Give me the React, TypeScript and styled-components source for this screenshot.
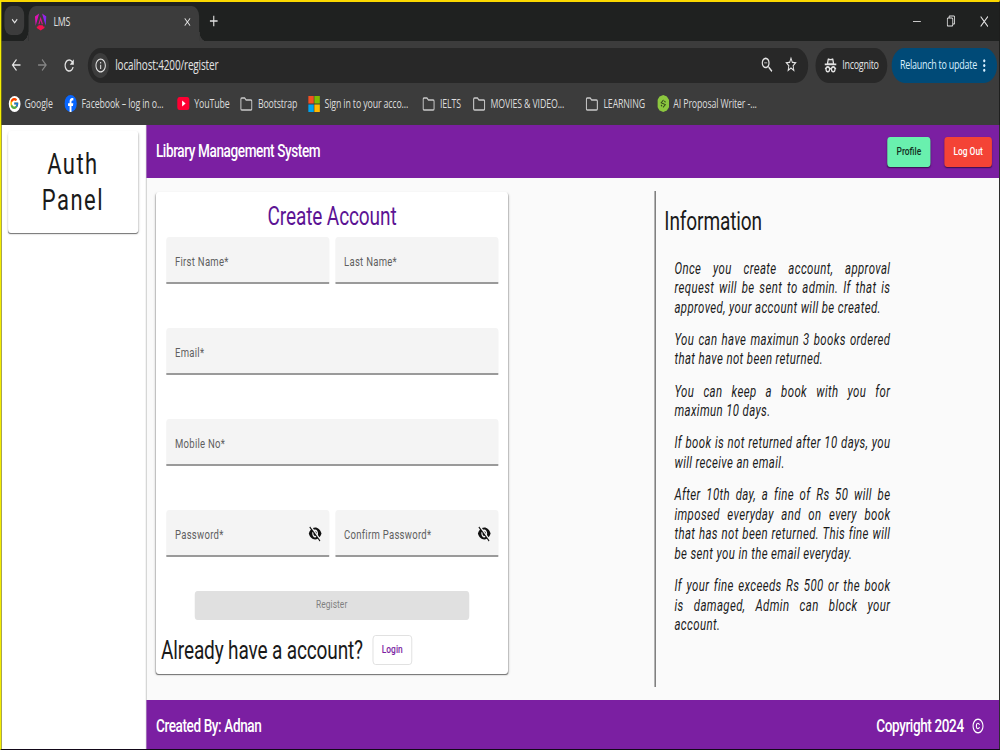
import React from "react";
import styled, { createGlobalStyle, css } from "styled-components";
import {
  MdArrowBack,
  MdArrowForward,
  MdRefresh,
  MdInfoOutline,
  MdZoomOut,
  MdStarBorder,
  MdMoreVert,
  MdVisibilityOff,
  MdCopyright,
  MdClose,
  MdAdd,
  MdKeyboardArrowDown,
} from "react-icons/md";
import { FcGoogle } from "react-icons/fc";

const GlobalStyle = createGlobalStyle`
  * { box-sizing: border-box; }
  html, body { margin: 0; padding: 0; width: 1000px; height: 750px; overflow: hidden; background: #1f2120; }
  h1, h2, p { margin: 0; font-weight: 400; }
  button { font: inherit; padding: 0; border: 0; background: none; color: inherit; }
  svg { display: block; flex: none; }
`;

const ui = `"Open Sans", "Noto Sans", sans-serif`;
const body = `Roboto, "Liberation Sans", sans-serif`;

/* A 1366px wide desktop shown in a narrower viewport. */
const Screen = styled.div`
  width: 1366px;
  height: 750px;
  transform: scaleX(0.73206);
  transform-origin: 0 0;
  display: flex;
  flex-direction: column;
  overflow: hidden;
  border-top: 2px solid #fbd800;
  border-left: 2.7px solid #f5ee00;
  border-right: 1.4px solid #1d1d1d;
  border-bottom: 1px solid #120818;
  white-space: nowrap;
`;

const TabStrip = styled.div`
  height: 39px;
  flex: none;
  display: flex;
  background: #1f2120;
  padding: 4px 0 0 4px;
  color: #e3e3e3;
`;

const TabSearch = styled.button`
  width: 27px;
  height: 29px;
  border-radius: 9px;
  background: #3c3c3c;
  display: grid;
  place-items: center;
`;

const Tab = styled.div`
  position: relative;
  width: 233px;
  height: 35px;
  margin-left: 6px;
  padding: 0 9px 4px 8px;
  border-radius: 10px 10px 0 0;
  background: #3c3c3c;
  display: flex;
  align-items: center;
  gap: 9px;
  &::before,
  &::after {
    content: "";
    position: absolute;
    bottom: 0;
    width: 10px;
    height: 9px;
  }
  &::before {
    left: -10px;
    background: radial-gradient(circle at 0 0, transparent 9px, #3c3c3c 9.5px);
  }
  &::after {
    right: -10px;
    background: radial-gradient(circle at 100% 0, transparent 9px, #3c3c3c 9.5px);
  }
`;

const TabTitle = styled.span`
  flex: 1;
  font: 12px/16px ${ui};
  letter-spacing: -0.3px;
`;

const NewTab = styled.button`
  width: 28px;
  height: 30px;
  margin-left: 6px;
  display: grid;
  place-items: center;
`;

const WindowControls = styled.div`
  margin-left: auto;
  height: 30px;
  display: flex;
  margin-right: -3px;
`;

const WindowButton = styled.button`
  width: 46.3px;
  display: grid;
  place-items: center;
`;

const Toolbar = styled.div`
  height: 47px;
  flex: none;
  display: flex;
  align-items: center;
  background: #3c3c3c;
  padding: 1px 2px 0 3px;
  color: #e3e3e3;
`;

const NavButton = styled.button<{ $dim?: boolean }>`
  width: 36.3px;
  height: 34px;
  margin-left: -1px;
  margin-right: 1px;
  display: grid;
  place-items: center;
  color: ${(p) => (p.$dim ? "#858585" : "#e3e3e3")};
`;

const Omnibox = styled.div`
  width: 983.5px;
  height: 35px;
  margin-left: 6.5px;
  padding: 0 14px 0 5px;
  border-radius: 18px;
  background: #282828;
  display: flex;
  align-items: center;
`;

const SiteInfo = styled.span`
  width: 24px;
  height: 25px;
  border-radius: 50%;
  background: #3c3c3c;
  display: grid;
  place-items: center;
`;

const Url = styled.span`
  flex: 1;
  margin-left: 8px;
  font: 13.6px/20px ${ui};
  letter-spacing: -0.18px;
`;

const OmniIcons = styled.span`
  display: flex;
  gap: 13px;
`;

const Chip = styled.button<{ $blue?: boolean }>`
  height: 35px;
  width: ${(p) => (p.$blue ? "144px" : "98.5px")};
  margin-left: ${(p) => (p.$blue ? "6px" : "10px")};
  padding: ${(p) => (p.$blue ? "0 8px 0 11px" : "0 12px 0 12px")};
  border-radius: 18px;
  background: ${(p) => (p.$blue ? "#004a77" : "#282828")};
  color: ${(p) => (p.$blue ? "#d7efff" : "#e3e3e3")};
  display: flex;
  align-items: center;
  justify-content: space-between;
  font: 12.2px/18px ${ui};
  letter-spacing: -0.32px;
`;

const Bookmarks = styled.div`
  height: 37px;
  flex: none;
  display: flex;
  align-items: flex-start;
  background: #3c3c3c;
  padding: 7px 0 0 9.6px;
  color: #dcdcdc;
`;

const Bookmark = styled.div<{ $w: number; $gap?: number }>`
  width: ${(p) => p.$w}px;
  height: 17px;
  display: flex;
  align-items: center;
  gap: ${(p) => p.$gap ?? 6}px;
  font: 12px/17px ${ui};
  letter-spacing: -0.17px;
`;

const GoogleDisc = styled.span`
  width: 16px;
  height: 16px;
  border-radius: 50%;
  background: #fff;
  display: grid;
  place-items: center;
`;

const Page = styled.div`
  flex: 1;
  min-height: 0;
  display: flex;
  font-family: ${body};
  color: #1a1a1a;
`;

const cardShadow = css`
  background: #fff;
  border-radius: 4px;
  box-shadow: 0 2px 1px -1px rgba(0, 0, 0, 0.4), 0 1px 1px rgba(0, 0, 0, 0.16),
    0 1px 3px rgba(0, 0, 0, 0.12);
`;

const Sidebar = styled.aside`
  width: 198px;
  flex: none;
  background: #fff;
  border-right: 1.4px solid #dcdcdc;
  padding: 6px 10.5px 0 8.7px;
`;

const AuthCard = styled.div`
  ${cardShadow}
  height: 102px;
  padding-top: 15px;
  text-align: center;
  font-size: 30px;
  line-height: 36px;
  letter-spacing: 2px;
  white-space: normal;
`;

const Main = styled.div`
  flex: 1;
  display: flex;
  flex-direction: column;
  background: #fafafa;
`;

const Bar = styled.div<{ $h: number; $drop: number }>`
  height: ${(p) => p.$h}px;
  flex: none;
  display: flex;
  align-items: center;
  justify-content: space-between;
  padding: ${(p) => p.$drop}px 10px 0 13px;
  background: #7b1fa2;
  color: #fff;
  font-size: 18.5px;
  font-weight: 500;
  line-height: 30px;
  letter-spacing: -0.52px;
`;

const BarTitle = styled.span`
  padding-bottom: 2px;
`;

const Actions = styled.div`
  display: flex;
  gap: 19px;
`;

const ActionButton = styled.button<{ $bg: string; $fg: string; $w: number }>`
  width: ${(p) => p.$w}px;
  height: 30px;
  padding-bottom: 2px;
  border-radius: 4px;
  background: ${(p) => p.$bg};
  color: ${(p) => p.$fg};
  font-size: 11.5px;
  font-weight: 500;
  line-height: 28px;
  letter-spacing: 0;
  box-shadow: 0 2px 1px -1px rgba(0, 0, 0, 0.3), 0 1px 2px rgba(0, 0, 0, 0.3);
`;

const Copyright = styled.div`
  display: flex;
  align-items: center;
  gap: 10px;
  margin-right: 10.5px;
`;

const Content = styled.div`
  flex: 1;
  display: flex;
  padding: 13px 0 0 13px;
`;

const FormCard = styled.form`
  ${cardShadow}
  width: 480.5px;
  height: 482px;
  margin-top: 1px;
  padding: 7px 13px 0 13.5px;
`;

const FormTitle = styled.h1`
  color: #5c1494;
  text-align: center;
  font-size: 26px;
  line-height: 34px;
  letter-spacing: -0.15px;
  margin-bottom: 4px;
`;

const Row = styled.div`
  display: flex;
  gap: 8px;
  height: 91px;
`;

const Field = styled.label`
  flex: 1;
  height: 47px;
  padding: 4px 10px 0 12.5px;
  display: flex;
  align-items: center;
  justify-content: space-between;
  background: #f4f4f4;
  border-bottom: 2px solid #9a9a9a;
  border-radius: 4px 4px 0 0;
  color: #5f5f5f;
  font-size: 13px;
  letter-spacing: 0.38px;
  svg {
    color: #111;
    margin-top: -3px;
  }
`;

const RegisterButton = styled.button`
  display: block;
  width: 375px;
  height: 29px;
  margin: -10.5px 0 0 39px;
  padding-bottom: 2px;
  border-radius: 4px;
  background: #e0e0e0;
  color: #808080;
  font-size: 11.5px;
  line-height: 27px;
  letter-spacing: 0.1px;
`;

const LoginRow = styled.div`
  display: flex;
  align-items: center;
  gap: 13px;
  margin: 15px 0 0 -6.5px;
  font-size: 26px;
  line-height: 31px;
  letter-spacing: -0.2px;
`;

const LoginButton = styled.button`
  width: 54px;
  height: 30px;
  padding-bottom: 2px;
  border: 1px solid #dcdcdc;
  border-radius: 4px;
  color: #7b1fa2;
  font-size: 11.5px;
  font-weight: 500;
  line-height: 26px;
  letter-spacing: 0;
`;

const Info = styled.section`
  width: 360px;
  height: 496px;
  margin-left: 200px;
  border-left: 2px solid #777;
  padding: 13px 0 0 12px;
`;

const InfoTitle = styled.h2`
  font-size: 26px;
  line-height: 34px;
  letter-spacing: -0.15px;
  margin-bottom: 21.5px;
`;

const Rule = styled.p`
  width: 295px;
  margin: 0 0 12.6px 13.8px;
  white-space: normal;
  text-align: justify;
  font-size: 15.6px;
  font-style: italic;
  line-height: 19.6px;
  letter-spacing: 0.52px;
`;

const AngularLogo = () => (
  <svg width="17" height="18" viewBox="0 0 24 24">
    <defs>
      <linearGradient id="ng" x1="0" y1="0" x2="1" y2="0.25">
        <stop offset="0" stopColor="#f0109c" />
        <stop offset="0.5" stopColor="#c415d0" />
        <stop offset="1" stopColor="#7b2cf5" />
      </linearGradient>
    </defs>
    <path
      fill="url(#ng)"
      d="M9.200 0 1 4.200l1.400 13L9.200 0zM14.800 0l6.800 17.200L23 4.200 14.800 0z"
    />
    <path fill="#e0128f" d="M12 4.500 7.500 15h2.400l2.100-5.400L14.100 15h2.400L12 4.500z" />
    <path fill="#f5104f" d="m8.100 16.600-1.100 1.800H4.600v2.200L12 24l7.400-3.400v-2.200H17l-1.100-1.800H8.100z" />
  </svg>
);

const FacebookLogo = () => (
  <svg width="17" height="17" viewBox="0 0 24 24">
    <circle cx="12" cy="12" r="12" fill="#0866ff" />
    <path fill="#fff" d="M10 24v-8.500H7v-3.700h3V9.600c0-3.800 1.900-5.400 5-5.400 1 0 1.700.1 2.200.2v3.300h-1.500c-1.600 0-2.100.8-2.100 2.300v1.800h3.500l-.6 3.700h-2.900V24z" />
  </svg>
);

const YouTubeLogo = () => (
  <svg width="17" height="13" viewBox="0 0 17 13">
    <rect width="17" height="13" rx="3.500" fill="#ff0033" />
    <path fill="#fff" d="M6.800 3.600v5.800l4.700-2.900z" />
  </svg>
);

const MicrosoftLogo = () => (
  <svg width="16" height="16" viewBox="0 0 16 16">
    <path fill="#f25022" d="M0 0h7.600v7.600H0z" />
    <path fill="#7fba00" d="M8.400 0H16v7.600H8.400z" />
    <path fill="#00a4ef" d="M0 8.400h7.600V16H0z" />
    <path fill="#ffb900" d="M8.400 8.400H16V16H8.400z" />
  </svg>
);

const Folder = () => (
  <svg width="17" height="14" viewBox="0 0 17 14" fill="none" stroke="#c9c9c9" strokeWidth="1.500">
    <path d="M1 2.300Q1 1 2.300 1h3.900l2 2h6.500Q16 3 16 4.300v7.400q0 1.300-1.300 1.300H2.300Q1 13 1 11.700z" />
  </svg>
);

const ProposalLogo = () => (
  <svg width="16" height="17" viewBox="0 0 16 17">
    <path fill="#8cc73f" d="M8 0l5 1.500L16 5v7l-3 3.500L8 17l-5-1.500L0 12V5l3-3.500z" />
    <path fill="none" stroke="#30451b" strokeWidth="1.100" d="M8.300 5 5.200 7.700l5.600 1.900-3.100 2.700M9.500 6l1.600 1.200M6.500 11.300 4.900 10" />
  </svg>
);

const IncognitoIcon = () => (
  <svg width="17" height="15" viewBox="0 0 17 15">
    <path fill="#e3e3e3" d="M4.500 1.200Q4.800.2 5.800.4l2.700.5 2.700-.5q1-.2 1.300.8l1 4.300h3v1.700H.5V5.500h3z" />
    <path fill="#3a3a3a" d="M6 2.200h5l.7 3H5.300z" />
    <g fill="none" stroke="#e3e3e3" strokeWidth="1.600">
      <circle cx="4.800" cy="11.300" r="2.400" />
      <circle cx="12.200" cy="11.300" r="2.400" />
      <path d="M7.200 11q1.300-.8 2.600 0M.8 10.500h1.600M14.600 10.500h1.600" />
    </g>
  </svg>
);

const rules = [
  "Once you create account, approval request will be sent to admin. If that is approved, your account will be created.",
  "You can have maximun 3 books ordered that have not been returned.",
  "You can keep a book with you for maximun 10 days.",
  "If book is not returned after 10 days, you will receive an email.",
  "After 10th day, a fine of Rs 50 will be imposed everyday and on every book that has not been returned. This fine will be sent you in the email everyday.",
  "If your fine exceeds Rs 500 or the book is damaged, Admin can block your account.",
];

export default function App() {
  return (
    <>
      <GlobalStyle />
      <Screen>
        <TabStrip>
          <TabSearch>
            <MdKeyboardArrowDown size={16} />
          </TabSearch>
          <Tab>
            <AngularLogo />
            <TabTitle>LMS</TabTitle>
            <MdClose size={14} />
          </Tab>
          <NewTab>
            <MdAdd size={18} />
          </NewTab>
          <WindowControls>
            <WindowButton>
              <svg width="11" height="11" viewBox="0 0 11 11" stroke="#e3e3e3">
                <path d="M0 5.500h11" />
              </svg>
            </WindowButton>
            <WindowButton>
              <svg width="12" height="12" viewBox="0 0 12 12" fill="none" stroke="#e3e3e3" strokeWidth="1.200">
                <rect x="1" y="3" width="7.500" height="8" rx="1" />
                <path d="M3.500 3V1.800Q3.500 1 4.300 1H10q1 0 1 1v6.200q0 .8-.8.8H8.500" />
              </svg>
            </WindowButton>
            <WindowButton>
              <svg width="11" height="11" viewBox="0 0 11 11" stroke="#e3e3e3" strokeWidth="1.200">
                <path d="M.5.5l10 10M10.500.5l-10 10" />
              </svg>
            </WindowButton>
          </WindowControls>
        </TabStrip>
        <Toolbar>
          <NavButton><MdArrowBack size={18} /></NavButton>
          <NavButton $dim><MdArrowForward size={18} /></NavButton>
          <NavButton><MdRefresh size={19} /></NavButton>
          <Omnibox>
            <SiteInfo><MdInfoOutline size={17} /></SiteInfo>
            <Url>localhost:4200/register</Url>
            <OmniIcons>
              <MdZoomOut size={20} />
              <MdStarBorder size={19} />
            </OmniIcons>
          </Omnibox>
          <Chip>
            <IncognitoIcon />
            Incognito
          </Chip>
          <Chip $blue>
            Relaunch to update
            <MdMoreVert size={19} />
          </Chip>
        </Toolbar>
        <Bookmarks>
          <Bookmark $w={76.7}>
            <GoogleDisc><FcGoogle size={13} /></GoogleDisc>
            Google
          </Bookmark>
          <Bookmark $w={154}><FacebookLogo />Facebook – log in o...</Bookmark>
          <Bookmark $w={86}><YouTubeLogo />YouTube</Bookmark>
          <Bookmark $w={93} $gap={7}><Folder />Bootstrap</Bookmark>
          <Bookmark $w={155.8}><MicrosoftLogo />Sign in to your acco...</Bookmark>
          <Bookmark $w={69} $gap={7}><Folder />IELTS</Bookmark>
          <Bookmark $w={154.2} $gap={7}><Folder />MOVIES &amp; VIDEO...</Bookmark>
          <Bookmark $w={97.5} $gap={7}><Folder />LEARNING</Bookmark>
          <Bookmark $w={150}><ProposalLogo />AI Proposal Writer -...</Bookmark>
        </Bookmarks>
        <Page>
          <Sidebar>
            <AuthCard>Auth<br />Panel</AuthCard>
          </Sidebar>
          <Main>
            <Bar $h={53} $drop={0}>
              <BarTitle>Library Management System</BarTitle>
              <Actions>
                <ActionButton $bg="#69f0ae" $fg="#12301f" $w={59}>Profile</ActionButton>
                <ActionButton $bg="#f44336" $fg="#fff" $w={65}>Log Out</ActionButton>
              </Actions>
            </Bar>
            <Content>
              <FormCard>
                <FormTitle>Create Account</FormTitle>
                <Row><Field>First Name*</Field><Field>Last Name*</Field></Row>
                <Row><Field>Email*</Field></Row>
                <Row><Field>Mobile No*</Field></Row>
                <Row>
                  <Field>Password*<MdVisibilityOff size={19} /></Field>
                  <Field>Confirm Password*<MdVisibilityOff size={19} /></Field>
                </Row>
                <RegisterButton type="button">Register</RegisterButton>
                <LoginRow>
                  Already have a account?
                  <LoginButton type="button">Login</LoginButton>
                </LoginRow>
              </FormCard>
              <Info>
                <InfoTitle>Information</InfoTitle>
                {rules.map((r) => (
                  <Rule key={r}>{r}</Rule>
                ))}
              </Info>
            </Content>
            <Bar $h={49} $drop={3}>
              <span>Created By: Adnan</span>
              <Copyright>
                Copyright 2024
                <MdCopyright size={18} />
              </Copyright>
            </Bar>
          </Main>
        </Page>
      </Screen>
    </>
  );
}
